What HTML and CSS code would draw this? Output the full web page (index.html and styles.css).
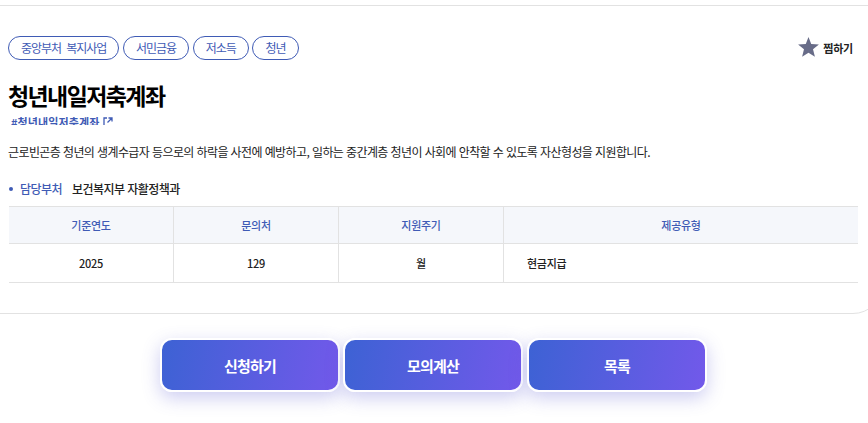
FILE: index.html
```html
<!DOCTYPE html>
<html lang="ko">
<head>
  <meta charset="UTF-8" />
  <title>청년내일저축계좌</title>
  <link rel="stylesheet" href="styles.css">
</head>
<body>

  <!-- Detail card -->
  <div class="detail-card">
    <div class="top-row">
      <div class="tags">
        <span class="tag">중앙부처 복지사업</span>
        <span class="tag">서민금융</span>
        <span class="tag">저소득</span>
        <span class="tag">청년</span>
      </div>
      <div class="bookmark">
        <svg class="star" width="21" height="20" viewBox="0 0 20 19"><path d="M10 0l2.600 6.600 7.300 .5-5.600 4.600 1.800 7-6.100-3.800-6.100 3.800 1.800-7L.1 7.100l7.300-.5z"/></svg>
        <span>찜하기</span>
      </div>
    </div>

    <h2 class="title">청년내일저축계좌</h2>
    <div class="hash-link">#청년내일저축계좌
      <svg width="10" height="10" viewBox="0 0 10 10"><path d="M4 1H1v8M5.500 1H9v3.500M9 1L4.500 5.500" fill="none" stroke="#3f5bb5" stroke-width="1.300"/></svg>
    </div>

    <p class="desc">근로빈곤층 청년의 생계수급자 등으로의 하락을 사전에 예방하고, 일하는 중간계층 청년이 사회에 안착할 수 있도록 자산형성을 지원합니다.</p>

    <div class="dept">
      <span class="dept-label">담당부처</span>
      <span class="dept-name">보건복지부 자활정책과</span>
    </div>

    <table class="info-table">
      <thead>
        <tr>
          <th>기준연도</th>
          <th>문의처</th>
          <th>지원주기</th>
          <th>제공유형</th>
        </tr>
      </thead>
      <tbody>
        <tr>
          <td>2025</td>
          <td>129</td>
          <td>월</td>
          <td class="left">현금지급</td>
        </tr>
      </tbody>
    </table>
  </div>

  <!-- Buttons -->
  <div class="btn-row">
    <button class="action-btn">신청하기</button>
    <button class="action-btn">모의계산</button>
    <button class="action-btn">목록</button>
  </div>

</body>
</html>
```

FILE: styles.css
```css
html, body {
  overflow: hidden;
}

body {
  margin: 0;
  height: 423px;
  background: #fff;
  font-family: "Noto Sans CJK KR", "Noto Sans", sans-serif;
  color: #111;
}

.detail-card {
  box-sizing: border-box;
  width: 884px;
  height: 309px;
  margin: 5px 0 0 -1px;
  padding: 30px 0 0 9px;
  border: 1px solid #e2e2e2;
  border-radius: 0 0 30px 0;
}

.top-row {
  display: flex;
  justify-content: space-between;
  align-items: center;
  width: 845px;
  margin-left: -1px;
}

.tags {
  display: flex;
  gap: 3.6px;
}

.tag {
  box-sizing: border-box;
  height: 24px;
  line-height: 21px;
  padding: 0 12px;
  border: 1px solid #3f5bb5;
  border-radius: 12px;
  font-size: 12px;
  letter-spacing: -1px;
  word-spacing: 2.7px;
  color: #3f5bb5;
}

.bookmark {
  display: flex;
  align-items: center;
  gap: 4px;
  font-size: 11px;
  font-weight: 700;
  letter-spacing: -0.2px;
  color: #222;
}

.star {
  margin-bottom: 3px;
  fill: #686c88;
}

.title {
  margin: 19px 0 0 -1px;
  height: 32px;
  line-height: 32px;
  font-size: 23px;
  font-weight: 700;
  letter-spacing: -1.6px;
  color: #000;
}

.hash-link {
  height: 10px;
  margin: 4px 0 0 2px;
  overflow: hidden;
  line-height: 14px;
  font-size: 11px;
  font-weight: 700;
  letter-spacing: 0.1px;
  color: #3f5bb5;
}

.desc {
  margin: 18px 0 0 -1px;
  line-height: 18px;
  font-size: 12px;
  letter-spacing: -0.6px;
  color: #222;
}

.dept {
  display: flex;
  align-items: center;
  gap: 10px;
  margin-top: 19px;
  font-size: 12px;
  line-height: 18px;
  letter-spacing: -0.55px;
}

.dept-label {
  position: relative;
  padding-left: 11px;
  font-weight: 500;
  color: #3f5bb5;
}

.dept-label::before {
  content: "";
  position: absolute;
  left: 0;
  top: 7px;
  width: 4px;
  height: 4px;
  border-radius: 50%;
  background: #3f5bb5;
}

.dept-name {
  font-weight: 500;
  color: #222;
}

.info-table {
  width: 849px;
  margin-top: 8px;
  border-collapse: collapse;
  table-layout: fixed;
  font-size: 11px;
  letter-spacing: -0.3px;
}

.info-table th {
  width: 164px;
  height: 36px;
  padding: 0;
  background: #f5f7fb;
  border-top: 1px solid #e2e2e2;
  border-bottom: 1px solid #e2e2e2;
  border-left: 1px solid #e2e2e2;
  font-weight: 500;
  color: #3f5bb5;
}

.info-table th:first-child,
.info-table td:first-child {
  border-left: none;
}

.info-table th:last-child {
  width: auto;
}

.info-table td {
  height: 38px;
  padding: 0;
  text-align: center;
  border-bottom: 1px solid #e2e2e2;
  border-left: 1px solid #e2e2e2;
  font-weight: 500;
  color: #222;
}

.info-table td.left {
  padding-left: 23px;
  text-align: left;
}

.btn-row {
  display: flex;
  justify-content: center;
  gap: 3px;
  margin-top: 24px;
  padding-right: 1px;
}

.action-btn {
  box-sizing: border-box;
  width: 180px;
  height: 54px;
  border: 2px solid #fff;
  border-radius: 12px;
  background: linear-gradient(100deg, #3d62d4, #7259ea);
  box-shadow: 0 6px 18px rgba(90, 90, 210, 0.3);
  font-family: inherit;
  font-size: 15px;
  font-weight: 700;
  letter-spacing: -0.8px;
  color: #fff;
  cursor: pointer;
}

.action-btn:last-child {
  margin-left: 1px;
}
```
